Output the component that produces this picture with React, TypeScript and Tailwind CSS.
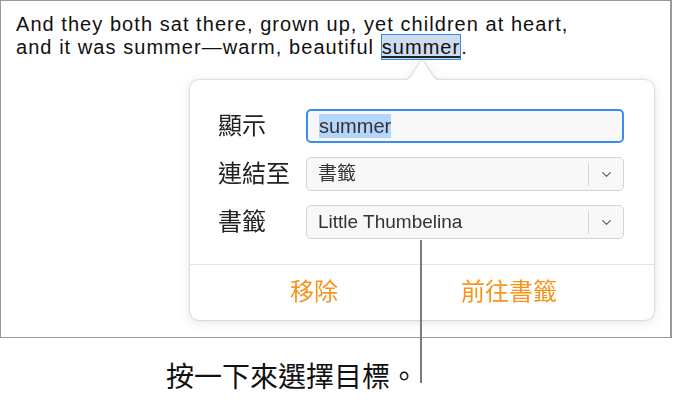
import { ChevronDown } from "lucide-react";

const cjk = "font-['Liberation_Sans','Noto_Sans_CJK_TC',sans-serif]";

function SelectBox({ value }: { value: string }) {
  return (
    <div className="flex h-[34px] items-center rounded-[5px] border border-[#d4d4d4] bg-[#f8f8f8]">
      <span className="flex-1 pl-[11px] text-[19px] text-[#333]">{value}</span>
      <span className="h-[23px] w-px bg-[#d6d6d6]" />
      <span className="flex w-[34px] items-center justify-center text-[#555]">
        <ChevronDown className="h-[15px] w-[15px]" strokeWidth={1.75} />
      </span>
    </div>
  );
}

export default function App() {
  return (
    <div className={`relative h-[403px] w-[673px] overflow-hidden bg-white ${cjk}`}>
      {/* document frame */}
      <div className="h-[338px] w-[672px] border border-r-2 border-[#999] pl-[15px] pt-[12px]">
        <p className="text-[20px] leading-[23px] tracking-[1.05px] text-[#111]">
          And they both sat there, grown up, yet children at heart,
          <br />
          and it was summer—warm, beautiful{" "}
          <span className="border border-[#2e8bf2] bg-[#cfdcee] py-[1px] underline decoration-[#222] decoration-[1.5px] underline-offset-[2px]">
            summer
          </span>
          .
        </p>
      </div>

      {/* popover */}
      <div className="absolute left-[190px] top-[60px] [filter:drop-shadow(0_0_1px_rgba(0,0,0,0.28))_drop-shadow(0_2px_6px_rgba(0,0,0,0.1))]">
        <svg
          className="absolute left-[211px] top-0"
          width="42"
          height="21"
          viewBox="0 0 42 21"
        >
          <path d="M0 21 Q8 21 11 15 L19 2.5 Q21 0 23 2.5 L31 15 Q34 21 42 21 Z" fill="#fff" />
        </svg>
        <div className="mt-[20px] h-[240px] w-[464px] rounded-[9px] bg-white">
          <div className="grid grid-cols-[88px_1fr] items-center gap-y-[14px] pl-[28px] pr-[30px] pt-[29px]">
            <span className="text-[24px] leading-[30px] text-[#222]">顯示</span>
            <div className="flex h-[34px] items-center rounded-[5px] border-2 border-[#3a8ef0] bg-[#f8f8f8] pl-[11px]">
              <span className="bg-[#b4d5fc] text-[20px] leading-[24px] text-[#333]">summer</span>
            </div>
            <span className="text-[24px] leading-[30px] text-[#222]">連結至</span>
            <SelectBox value="書籤" />
            <span className="text-[24px] leading-[30px] text-[#222]">書籤</span>
            <SelectBox value="Little Thumbelina" />
          </div>
          <div className="mt-[25px] flex h-[55px] items-center gap-[123px] border-t border-[#e4e4e4] pl-[100px] text-[24px] text-[#f7941d]">
            <span>移除</span>
            <span>前往書籤</span>
          </div>
        </div>
      </div>

      {/* callout line */}
      <div className="absolute left-[420px] top-[240px] h-[143px] w-[2px] bg-[#7a7a7a]" />

      {/* caption */}
      <p className="mt-[25px] pl-[166px] text-[28px] leading-[30px] text-[#111]">按一下來選擇目標。</p>
    </div>
  );
}
